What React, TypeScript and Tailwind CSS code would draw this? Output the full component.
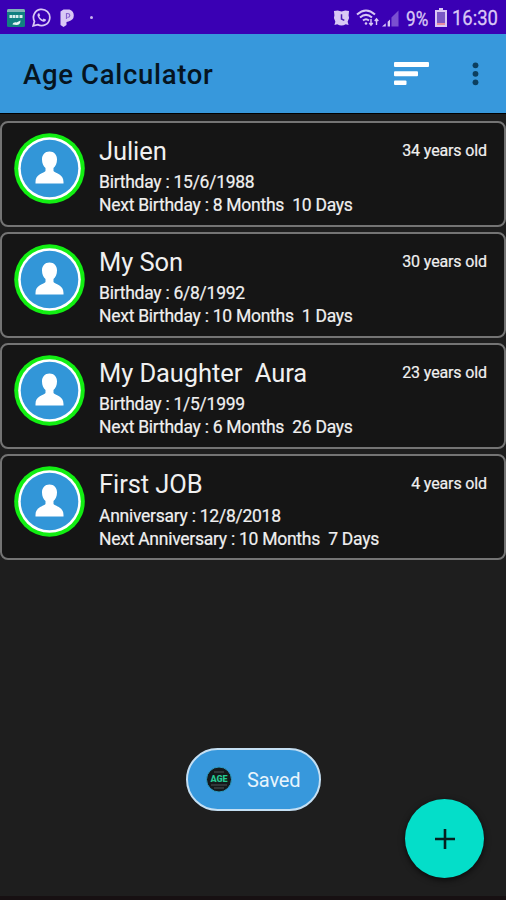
import { clsx } from 'clsx'

interface AgeEntry {
  name: string
  kind: 'Birthday' | 'Anniversary'
  date: string
  next: string
  age: string
}

const entries: AgeEntry[] = [
  { name: 'Julien', kind: 'Birthday', date: '15/6/1988', next: '8 Months  10 Days', age: '34 years old' },
  { name: 'My Son', kind: 'Birthday', date: '6/8/1992', next: '10 Months  1 Days', age: '30 years old' },
  { name: 'My Daughter  Aura', kind: 'Birthday', date: '1/5/1999', next: '6 Months  26 Days', age: '23 years old' },
  { name: 'First JOB', kind: 'Anniversary', date: '12/8/2018', next: '10 Months  7 Days', age: '4 years old' },
]

function StatusBar() {
  return (
    <div className="flex h-[34px] items-center justify-between bg-[#3a00b4] pl-[7px] pr-[8px] pt-px text-[#d9c8f5]">
      <div className="flex items-center">
        <svg className="h-[18px] w-[18px]" viewBox="0 0 18 18">
          <rect width="18" height="18" rx="1.5" fill="#118080" />
          <path d="M0 3V1.500Q0 0 1.500 0H16.500Q18 0 18 1.500V3z" fill="#7fb5b8" />
          <path d="M2.500 6h3v3h-3zM6 6h2.500v3H6zM9 6h2.500v3H9zM12.500 6h3v3h-3z" fill="#d8eeee" />
          <path d="M5.500 15.500c.5-2 2.500-2.500 4-2l4-2c0 3-1.500 4.500-4 4.500z" fill="#e6f6f4" />
        </svg>
        <svg className="ml-[7px] h-[19px] w-[19px]" viewBox="0 0 24 24" fill="none" stroke="currentColor" strokeWidth="2.200">
          <path d="M1.500 22.500l1.600-5.700A10.300 10.300 0 1 1 7.300 21z" />
          <path
            d="M8.300 6.500c-1.300.6-1.800 2.200-1 4.200 1 2.800 3.200 5.200 6.200 6.300 2 .7 3.600.1 4.100-1.500v-1l-3-1.300-1.300 1.500c-1.900-.9-3.200-2.200-4-3.900l1-1.300-1-3z"
            fill="currentColor"
            stroke="none"
          />
        </svg>
        <svg className="ml-[9px] h-[18px] w-[14px]" viewBox="0 0 14 18">
          <path
            d="M3.500.5H9.500Q13.800 2 13.800 6.500T8.500 12.500L6.500 13v3l-3 2L.5 16V2.500z"
            fill="currentColor"
          />
          <path d="M6.500 10V4.500h1.500q1.800.3 1.800 2T7.500 8.500" fill="none" stroke="#8760cf" strokeWidth="1.200" />
        </svg>
        <span className="ml-[16px] h-[3px] w-[3px] rounded-full bg-[#c9b3ef]" />
      </div>
      <div className="flex items-center">
        <svg className="h-[18px] w-[17px]" viewBox="0 0 18 18">
          <path
            d="M1 1.500l4-.5 4 1 4-1 4 .5-.5 4.500.5 3-1.500 4 1 3.500-3-1a8 8 0 0 1-9 0l-3 1 1-3.500L1 9l.5-3z"
            fill="currentColor"
          />
          <path d="M9 5v5l3 1.500" fill="none" stroke="#4a1bb5" strokeWidth="1.600" />
        </svg>
        <svg className="ml-[6px] h-[20px] w-[24px]" viewBox="0 0 24 20" fill="none" stroke="currentColor" strokeWidth="2">
          <path d="M1 6.500Q10-1.500 19 6.500M4 9.500q6-5.200 12 0M7 12.500q3-2.600 6 0" />
          <circle cx="10" cy="15.500" r="1.300" fill="currentColor" stroke="none" />
          <path d="M15 11v6m-1.800-2l1.800 2.200 1.800-2.200M20.500 17v-6m-1.800 2l1.800-2.200 1.800 2.200" strokeWidth="1.400" />
        </svg>
        <svg className="ml-[2px] h-[18px] w-[17px]" viewBox="0 0 18 18">
          <path d="M0 18l4-3.500V18zM6 18v-5L8.500 10.500V18z" fill="currentColor" />
          <path d="M10 18V8.500L17.500 1v17z" fill="#7a4fd0" />
        </svg>
        <span className="ml-[7px] inline-block w-[24px] whitespace-nowrap pt-[2px] text-[20px] leading-none [-webkit-text-stroke:0.3px]">
          <span className="inline-block origin-left scale-x-[0.86]">9%</span>
        </span>
        <svg className="ml-[5px] h-[19px] w-[12px]" viewBox="0 0 12 19">
          <path d="M4 0h4v2h4v17H0V2h4z" fill="currentColor" />
          <path d="M2 4h8v11H2z" fill="#7a58c4" />
          <path d="M2 15h8v2H2z" fill="#e88aa0" />
        </svg>
        <span className="ml-[5px] inline-block w-[46px] whitespace-nowrap pt-[2px] text-[20.500px] leading-none [-webkit-text-stroke:0.3px]">
          <span className="inline-block origin-left scale-x-[0.9]">16:30</span>
        </span>
      </div>
    </div>
  )
}

function AppBar() {
  return (
    <header className="flex h-[80px] items-center border-b border-black bg-[#3798dc] pl-[23px] pr-[27px]">
      <h1 className="flex-1 pt-[3px] text-[27.500px] font-medium leading-8 tracking-[0.68px] text-[#06141f]">
        Age Calculator
      </h1>
      <svg className="h-[24px] w-[35px]" viewBox="0 0 35 24" fill="#fff">
        <rect width="35" height="5" rx="1" />
        <rect y="9.200" width="24" height="5" rx="1" />
        <rect y="18.500" width="12.500" height="4.500" rx="1" />
      </svg>
      <svg className="ml-[43px] h-[24px] w-[7px]" viewBox="0 0 7 24" fill="#0c3f60">
        <circle cx="3.500" cy="3.300" r="2.900" />
        <circle cx="3.500" cy="11.800" r="2.900" />
        <circle cx="3.500" cy="20.300" r="2.900" />
      </svg>
    </header>
  )
}

function Avatar() {
  return (
    <svg className="h-[71px] w-[71px] shrink-0" viewBox="0 0 71 71">
      <circle cx="35.500" cy="35.500" r="35.300" fill="#12ee12" />
      <circle cx="35.500" cy="35.500" r="31.300" fill="#fff" />
      <circle cx="35.500" cy="35.500" r="28.800" fill="#3296d8" />
      <path
        d="M35.500 18.500c4.600 0 7.500 3.300 7.500 8 0 3.800-1.400 6.800-3.500 8.500v3c2.500 2.600 10 3 10 11v1.500h-28V49c0-8 7.500-8.400 10-11v-3c-2.100-1.700-3.500-4.700-3.500-8.500 0-4.700 2.900-8 7.500-8z"
        fill="#fff"
      />
    </svg>
  )
}

function AgeCard({ entry }: { entry: AgeEntry }) {
  return (
    <li className="flex h-[106px] rounded-lg border-2 border-[#747474] bg-[#151515] pl-[12px] pr-[17px] pt-[9.500px] text-[#f0f0f0]">
      <Avatar />
      <div className="ml-[14px] flex-1 whitespace-pre">
        <div className="flex items-start justify-between pt-[2px]">
          <h2 className="text-[25.500px] leading-8 tracking-[-0.08px]">{entry.name}</h2>
          <span className="pt-[4px] text-[16px] leading-6 tracking-[-0.13px] [-webkit-text-stroke:0.2px]">
            {entry.age}
          </span>
        </div>
        <div className="mt-[4.800px] text-[17.500px] leading-[23px] tracking-[-0.26px] [-webkit-text-stroke:0.2px]">
          <p>{`${entry.kind} : ${entry.date}`}</p>
          <p>{`Next ${entry.kind} : ${entry.next}`}</p>
        </div>
      </div>
    </li>
  )
}

function Toast({ message }: { message: string }) {
  return (
    <div className="absolute left-[186px] top-[748px] flex h-[63px] w-[135px] items-center rounded-full border-2 border-[#c4dff3] bg-[#3798dc] pl-[18px]">
      <svg className="h-[27px] w-[27px]" viewBox="0 0 27 27">
        <circle cx="13" cy="13.500" r="12.500" fill="#15191b" stroke="#2d9cc4" />
        <path d="M8 6h10M5 19h16M8 22h10" stroke="#4c5557" strokeWidth="1.200" />
        <text x="13" y="16" textAnchor="middle" fontSize="9" fontWeight="900" fill="#25c992">
          AGE
        </text>
      </svg>
      <span className="ml-[14px] text-[20px] tracking-[-0.1px] text-[#e8f4fc]">{message}</span>
    </div>
  )
}

export default function App() {
  return (
    <div
      className={clsx(
        'relative flex h-[900px] w-[506px] flex-col overflow-hidden bg-[#1e1e1e]',
        "font-['Roboto',sans-serif]"
      )}
    >
      <StatusBar />
      <AppBar />
      <ul className="mt-[7px] flex flex-col gap-[5.100px]">
        {entries.map((entry) => (
          <AgeCard key={entry.name} entry={entry} />
        ))}
      </ul>
      <Toast message="Saved" />
      <button
        aria-label="Add"
        className="absolute left-[405px] top-[799px] flex h-[79px] w-[79px] items-center justify-center rounded-full bg-[#04dec9] shadow-[0_2px_6px_rgba(0,0,0,0.7)]"
      >
        <svg className="h-[20px] w-[20px]" viewBox="0 0 20 20" stroke="#06201f" strokeWidth="2.600">
          <path d="M10 0v20M0 10h20" />
        </svg>
      </button>
      <div className="mt-auto h-[4px] bg-[#171012]" />
    </div>
  )
}
